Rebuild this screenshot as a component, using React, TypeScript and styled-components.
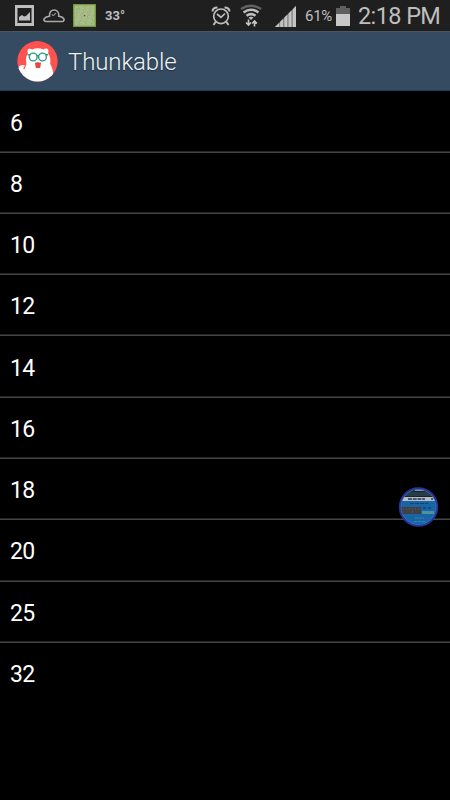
import React from 'react';
import styled, { createGlobalStyle } from 'styled-components';

const GlobalStyle = createGlobalStyle`
  * { box-sizing: border-box; }
  body { margin: 0; background: #000; }
`;

const Screen = styled.div`
  position: relative;
  width: 450px;
  height: 800px;
  overflow: hidden;
  background: #000;
  color: #fff;
  font-family: Roboto, 'Noto Sans', sans-serif;
`;

const StatusBar = styled.header`
  display: flex;
  justify-content: space-between;
  height: 31px;
  padding: 0 10px 0 15px;
  background: #1f1f1f;
  color: #bebebe;
`;

const StatusGroup = styled.div`
  display: flex;
  align-items: center;
  height: 31px;
`;

const Icon = styled.svg<{ $gap?: number }>`
  display: block;
  flex: none;
  margin-right: ${({ $gap = 0 }) => $gap}px;
`;

const Temperature = styled.span`
  font-size: 13px;
  line-height: 31px;
  font-weight: 700;
`;

const BatteryLevel = styled.span`
  width: 31px;
  font-size: 15px;
  line-height: 32px;
  letter-spacing: -0.3px;
`;

const Clock = styled.time`
  width: 82px;
  padding-top: 1px;
  font-size: 23.5px;
  line-height: 31px;
  letter-spacing: -0.6px;
  white-space: nowrap;
`;

const TitleBar = styled.div`
  display: flex;
  align-items: center;
  height: 60px;
  padding-left: 17px;
  background: #344b61;
  border-top: 1px solid #4b5661;
  border-bottom: 1px solid #243d53;
`;

const Title = styled.h1`
  margin: 0;
  padding-top: 2px;
  color: #f0f2f4;
  font-size: 24px;
  font-weight: 300;
  line-height: 56px;
  letter-spacing: -0.12px;
  text-shadow: 0 1px 1px #1e2d3b;
`;

const List = styled.ul`
  margin: 0;
  padding: 0.4px 0 0;
  list-style: none;
`;

const Row = styled.li`
  display: flex;
  align-items: center;
  height: 61.28px;
  padding: 3px 10px 0;
  border-bottom: 1px solid #444;
  box-shadow: inset 0 -1px #252525;
  font-size: 23px;
  letter-spacing: -0.6px;
  &:last-child { border-bottom-color: transparent; box-shadow: none; }
`;

const FloatingBubble = styled.div`
  position: absolute;
  left: 398px;
  top: 487px;
`;

const sizes = [6, 8, 10, 12, 14, 16, 18, 20, 25, 32];

const PictureIcon = () => (
  <Icon width="19" height="22" viewBox="0 0 19 22" $gap={9}>
    <path fill="#bebebe" fillRule="evenodd" d="M0 0h19v21H0zM2.5 3v15h14V3z" />
    <path fill="#bebebe" d="M4 15.5V12l3-2 2 1.5 2-.5 4-4v8.5z" />
  </Icon>
);

const CloudIcon = () => (
  <Icon width="22" height="16" viewBox="0 0 22 16" $gap={8}>
    <path d="M3.3 13.5C.8 13.5.5 11.7 1.4 10.5 2.5 9 4.6 8.4 6.5 8.2 6.2 4.2 8.3 2 11.2 2s4.8 2.3 4.6 6.2c2.2.2 4 1 4.8 2.3.9 1.3.4 3-1.4 3z" fill="none" stroke="#aaa" strokeWidth="1.6" />
    <path d="M9 6.3q1.4 2 2.7.2l1-1.5" fill="none" stroke="#9b9b9b" strokeWidth="1.2" />
  </Icon>
);

const speckles = Array.from({ length: 130 }, (_, i) => ({
  x: 2 + ((i * 37 + 11) % 181) / 10,
  y: 2 + ((i * 73 + 29) % 187) / 10,
  color: i % 3 === 0 ? '#8caa70' : i % 3 === 1 ? '#bac69b' : '#96b179',
}));

const MapIcon = () => (
  <Icon width="23" height="23" viewBox="0 0 23 23" $gap={9}>
    <rect width="23" height="23" fill="#729b38" />
    <rect x="1.3" y="1.3" width="20.4" height="20.4" fill="#a7bd85" />
    {speckles.map((s, i) => <rect key={i} x={s.x} y={s.y} width="1" height="1" fill={s.color} />)}
    <rect x="11" y="11" width="1.3" height="1.3" fill="#b42418" />
  </Icon>
);

const AlarmIcon = () => (
  <Icon width="20" height="20" viewBox="0 0 20 20" $gap={9}>
    <g fill="none" stroke="#bebebe">
      <circle cx="10" cy="10.3" r="7.3" strokeWidth="1.7" />
      <path d="M6 8l4 3.3L14 7.5" strokeWidth="1.7" />
      <path d="M1.5 5.5q.2-4 5-4M18.5 5.5q-.2-4-5-4M4.5 16l-2 3M15.5 16l2 3" strokeWidth="2" />
    </g>
  </Icon>
);

const WifiIcon = () => (
  <Icon width="22" height="24" viewBox="0 0 22 24" $gap={13}>
    <g fill="none" strokeWidth="2.5">
      <path d="M1 5Q11-1.5 21 5" stroke="#626262" />
      <path d="M3.5 8.5q7.5-5.5 15 0M6.5 11.8q4.5-3.4 9 0" stroke="#bebebe" />
    </g>
    <path d="M8.5 13.5q2.5-1.6 5 0L11 16z" fill="#bebebe" />
    <path d="M8.5 15.5V21m-2.4-2.5L8.5 21l2.4-2.5M14.5 22.5v-5.5m-2.4 2.5l2.4-2.5 2.4 2.5" fill="none" stroke="#c6c6c6" strokeWidth="1.6" />
  </Icon>
);

const SignalIcon = () => (
  <Icon width="21" height="22" viewBox="0 0 21 22" $gap={9}>
    <path d="M0 22L21 1v21z" fill="#858585" />
    <path d="M0 22l4-4v4zM5.2 22v-5.2L8 14v8zM9.4 22v-9.4l2.8-2.8V22zM13.6 22V8.4l2.8-2.8V22zM17.8 22V4.2L21 1v21z" fill="#c4c4c4" />
  </Icon>
);

const BatteryIcon = () => (
  <Icon width="14" height="20" viewBox="0 0 14 20" $gap={8}>
    <path d="M4 0h6v2h4v18H0V2h4z" fill="#606060" />
    <path d="M0 8h14v12H0z" fill="#c8c8c8" />
  </Icon>
);

const BeaverLogo = () => (
  <Icon width="41" height="41" viewBox="0 0 41 41" $gap={10}>
    <defs><clipPath id="logo-disc"><circle cx="20.5" cy="20.3" r="20.2" /></clipPath></defs>
    <g clipPath="url(#logo-disc)">
      <rect width="41" height="41" fill="#ff514d" />
      <path fill="#fff" d="M11 12C9 8 13 7 15 8.5q5.7-2.5 11.5 0C29 6.5 33 8 31 12c2.3 3 2.8 7 2.2 11 2 3 3.6 8 3.8 18H4C3 36 0 29 1.5 26.5 3 23.5 7 23.5 8.5 25l1-1.5C8.5 19 9 15 11 12z" />
      <path d="M6.3 27.5l1.6-3 1 .3-1.6 3.7z" fill="#ff514d" />
    </g>
    <g fill="none" stroke="#2c9b83" strokeWidth="1.4">
      <circle cx="16.2" cy="16" r="3.9" /><circle cx="25.5" cy="16" r="3.9" />
      <path d="M10.5 13.7h2.8M20 15q.9-.8 1.8 0M28.4 13.7h2.8" />
    </g>
    <path d="M18 22h6l-.8 5h-4.4z" fill="#e84844" />
    <path d="M18 22.2q1.5 0 3-1 1.5 1 3 1" stroke="#9e5555" strokeWidth=".8" fill="none" />
  </Icon>
);

const ScreenPreview = () => (
  <Icon width="41" height="41" viewBox="0 0 41 41">
    <defs><clipPath id="preview-disc"><circle cx="20.5" cy="20" r="18" /></clipPath></defs>
    <g clipPath="url(#preview-disc)">
      <path fill="#1865a5" d="M0 0h41v41H0z" />
      <path fill="#18232a" d="M0 0h41v10H0z" />
      <path fill="#8797a1" d="M17 2.5h9v1.5h-9z" />
      <path fill="#293d48" d="M6 5h30v4H6z" />
      <path fill="#b6bec3" d="M3 10h35v4H3z" />
      <path d="M10 12h17M33 12h2" stroke="#263b56" strokeWidth="1.4" strokeDasharray="4 .7" />
      <path d="M12 16.5h18" stroke="#0d4272" strokeDasharray="4 1" />
      <path fill="#3f4144" d="M3 20h20v7H3z" />
      <path d="M5 22h16M14 25h2" stroke="#606366" strokeDasharray="1 2" />
      <path d="M25 21h9" stroke="#0b457a" strokeWidth="1.5" strokeDasharray="3 2" />
      <path fill="#548d9c" d="M24 24h12v3H24z" />
      <path d="M17 31h9M16 34.5h11" stroke="#3b81b2" strokeDasharray="3 1" />
    </g>
    <circle cx="20.5" cy="20" r="18.7" fill="none" stroke="#2b329a" strokeWidth="2" />
    <circle cx="20.5" cy="20" r="17.5" fill="none" stroke="#397bb8" strokeWidth=".7" />
  </Icon>
);

export default function App() {
  return (
    <>
      <GlobalStyle />
      <Screen>
        <StatusBar>
          <StatusGroup>
            <PictureIcon /><CloudIcon /><MapIcon />
            <Temperature>33°</Temperature>
          </StatusGroup>
          <StatusGroup>
            <AlarmIcon /><WifiIcon /><SignalIcon />
            <BatteryLevel>61%</BatteryLevel>
            <BatteryIcon />
            <Clock>2:18 PM</Clock>
          </StatusGroup>
        </StatusBar>
        <TitleBar><BeaverLogo /><Title>Thunkable</Title></TitleBar>
        <List>{sizes.map(size => <Row key={size}>{size}</Row>)}</List>
        <FloatingBubble><ScreenPreview /></FloatingBubble>
      </Screen>
    </>
  );
}
